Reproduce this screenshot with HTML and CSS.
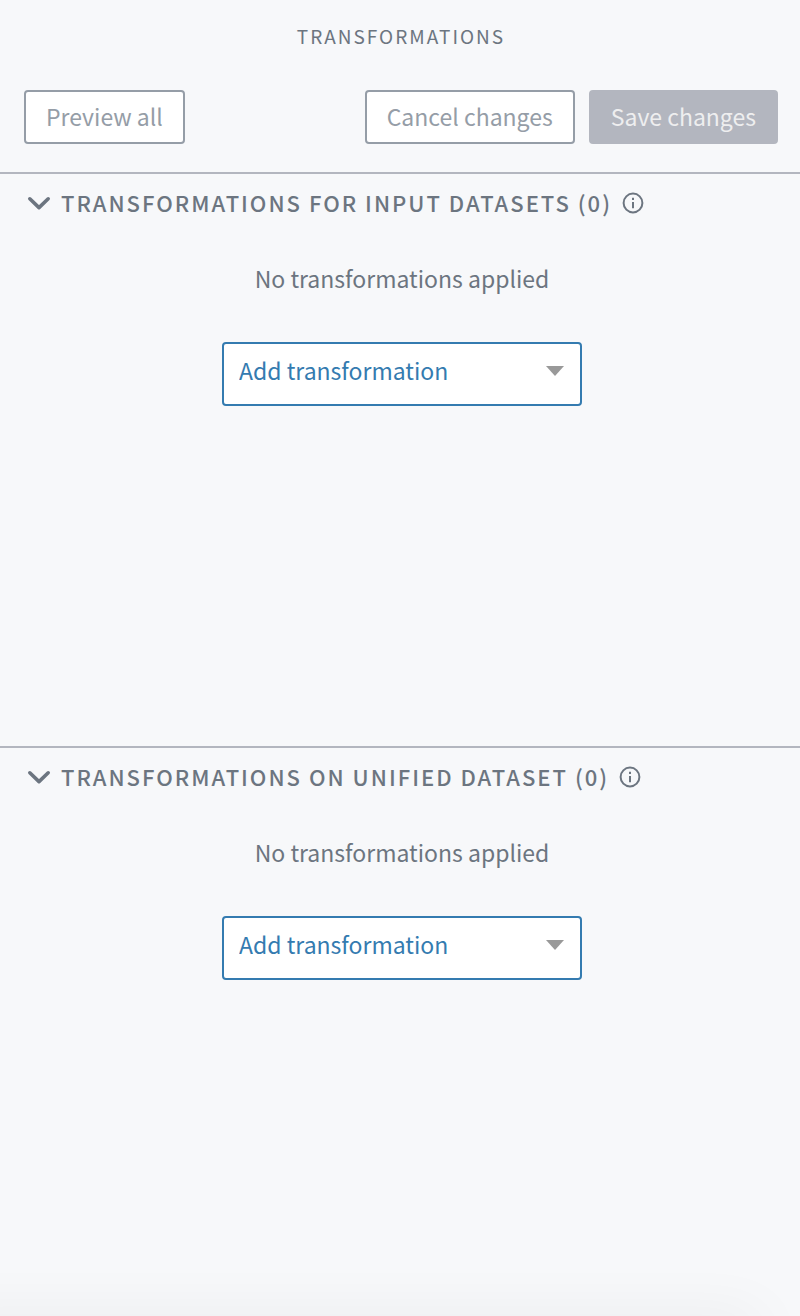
FILE: index.html
```html
<!DOCTYPE html>
<html lang="en">
<head>
<meta charset="utf-8">
<title>Transformations</title>
<link rel="stylesheet" href="styles.css">
</head>
<body>
<main class="page">
  <header class="header">
    <h1 class="title">Transformations</h1>
    <div class="toolbar">
      <button class="btn" type="button" disabled>Preview all</button>
      <div class="actions">
        <button class="btn" type="button" disabled>Cancel changes</button>
        <button class="btn btn-primary" type="button" disabled>Save changes</button>
      </div>
    </div>
  </header>
  <section class="section">
    <div class="section-head">
      <button class="toggle" type="button" aria-expanded="true">
        <svg class="chevron" width="24" height="18" viewBox="0 0 24 18" aria-hidden="true"><path d="M2.8 5.8 12 14.6l9.2-8.8"/></svg>
        <span>Transformations for input datasets (0)</span>
      </button>
      <svg class="info" width="22" height="24" viewBox="0 0 22 24" role="img" aria-label="Information"><circle cx="11" cy="13" r="9.4"/><path d="M11 12v6.2M11 7.8v2.3"/></svg>
    </div>
    <p class="empty">No transformations applied</p>
    <div class="picker">
      <select class="select" aria-label="Add transformation to input datasets"><option>Add transformation</option></select>
      <svg class="caret" width="18" height="10" viewBox="0 0 18 10" aria-hidden="true"><path d="M0 0h18L9 10z"/></svg>
    </div>
  </section>
  <section class="section">
    <div class="section-head">
      <button class="toggle" type="button" aria-expanded="true">
        <svg class="chevron" width="24" height="18" viewBox="0 0 24 18" aria-hidden="true"><path d="M2.8 5.8 12 14.6l9.2-8.8"/></svg>
        <span>Transformations on unified dataset (0)</span>
      </button>
      <svg class="info" width="22" height="24" viewBox="0 0 22 24" role="img" aria-label="Information"><circle cx="11" cy="13" r="9.4"/><path d="M11 12v6.2M11 7.8v2.3"/></svg>
    </div>
    <p class="empty">No transformations applied</p>
    <div class="picker">
      <select class="select" aria-label="Add transformation to unified dataset"><option>Add transformation</option></select>
      <svg class="caret" width="18" height="10" viewBox="0 0 18 10" aria-hidden="true"><path d="M0 0h18L9 10z"/></svg>
    </div>
  </section>
</main>
</body>
</html>
```
FILE: styles.css
```css
* { box-sizing: border-box; }
body {
  margin: 0;
  background: #f7f8fa;
  color: #6c7580;
  font-family: "Source Sans Pro", "Noto Sans CJK JP", sans-serif;
  font-size: 23px;
  line-height: 32px;
}
button, select { font: inherit; color: inherit; }
.page {
  display: grid;
  grid-template-rows: auto 574fr 570fr;
  min-height: 100vh;
  overflow: hidden;
  position: relative;
}
.page::after {
  content: "";
  position: absolute;
  left: -60px;
  right: 40px;
  bottom: -40px;
  height: 40px;
  box-shadow: 0 0 60px rgba(0, 0, 0, 0.06);
  pointer-events: none;
}
.header { padding: 20px 22px 28px 24px; }
.title {
  margin: 0 0 38px;
  font-size: 19px;
  font-weight: 400;
  letter-spacing: 2px;
  text-align: center;
  text-transform: uppercase;
}
.toolbar, .actions { display: flex; }
.toolbar { justify-content: space-between; }
.actions { gap: 14px; }
.btn {
  height: 54px;
  padding: 0 20px 2px;
  border: 2px solid #959da7;
  border-radius: 4px;
  background: #fff;
  color: #959da7;
}
.btn-primary {
  border-color: #b3b6bf;
  background: #b3b6bf;
  color: #eeeeef;
}
.section {
  padding: 12px 20px 24px 24px;
  border-top: 2px solid #b3b6bf;
}
.section-head {
  display: flex;
  align-items: center;
  gap: 10px;
}
.toggle {
  display: flex;
  align-items: center;
  gap: 10px;
  padding: 0 0 0 3px;
  border: 0;
  background: none;
  font-size: 22px;
  font-weight: 500;
  letter-spacing: 2px;
  text-transform: uppercase;
}
.chevron, .info {
  fill: none;
  stroke: #6c7580;
  flex: none;
}
.chevron {
  stroke-width: 3.6;
  stroke-linecap: round;
  stroke-linejoin: round;
}
.info { stroke-width: 2; }
.empty {
  margin: 44px 0 48px;
  text-align: center;
}
.picker {
  position: relative;
  width: 360px;
  max-width: 100%;
  margin: 0 auto;
}
.select {
  display: block;
  width: 100%;
  height: 64px;
  padding: 0 48px 8px 15px;
  border: 2px solid #347bb0;
  border-radius: 4px;
  background: #fff;
  color: #347bb0;
  appearance: none;
}
.caret {
  position: absolute;
  top: 24px;
  right: 18px;
  fill: #999;
  pointer-events: none;
}
```
